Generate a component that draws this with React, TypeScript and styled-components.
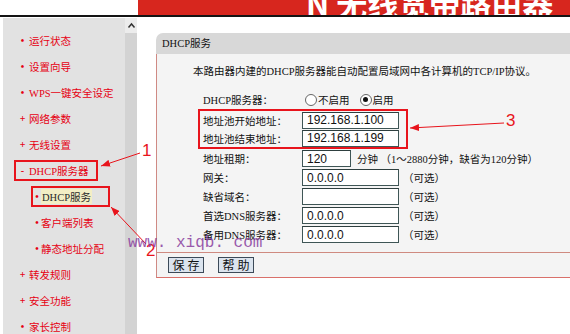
import React from 'react';
import styled, { createGlobalStyle } from 'styled-components';

const GlobalStyle = createGlobalStyle`
  html, body { margin: 0; padding: 0; background: #fff; }
  body {
    font-family: "Liberation Serif", "Noto Sans CJK SC", serif;
    font-size: 10.5px;
    color: #111;
  }
`;

const Page = styled.div`
  position: relative;
  width: 570px;
  height: 334px;
  overflow: hidden;
  display: flex;
  flex-direction: column;
`;

const TopBar = styled.header`
  display: flex;
  height: 15px;
  flex-shrink: 0;
  border-bottom: 2px solid #141414;
`;

const TopBlank = styled.div`
  width: 138px;
  background: #fff;
`;

const Banner = styled.div`
  flex: 1;
  background: #d7261e;
  overflow: hidden;
  display: flex;
  align-items: flex-end;
  padding-left: 168px;
`;

const BannerTitle = styled.span`
  color: #fff;
  font-family: "Noto Sans CJK SC", sans-serif;
  font-weight: 700;
  font-size: 31px;
  line-height: 31px;
  white-space: nowrap;
  margin-bottom: -3px;
`;

const Body = styled.div`
  flex: 1;
  display: flex;
  padding-top: 1px;
  min-height: 0;
`;

const Sidebar = styled.nav`
  width: 122px;
  margin-left: 3px;
  background: #e2e2e2;
`;

const Menu = styled.ul`
  list-style: none;
  margin: 0;
  padding: 9px 0 0;
`;

const MenuItem = styled.li<{ $level: number }>`
  height: 26px;
  display: flex;
  align-items: center;
  padding-left: ${p => (p.$level ? 28 : 11)}px;
`;

const ItemBody = styled.span<{ $box?: number }>`
  display: inline-flex;
  align-items: center;
  box-sizing: border-box;
  height: 21px;
  border: 2px solid ${p => (p.$box ? '#e8141c' : 'transparent')};
  ${p => (p.$box ? `width: ${p.$box}px;` : '')}
  color: #e60012;
`;

const Marker = styled.span<{ $level: number }>`
  width: ${p => (p.$level ? 8 : 13)}px;
  text-align: center;
  font-weight: 700;
  font-size: 10px;
`;

const ItemText = styled.span<{ $active?: boolean }>`
  white-space: nowrap;
  ${p => (p.$active ? 'background: #f3eec4; color: #2a2a2a; padding: 0 1px;' : '')}
`;

const ScrollTrack = styled.div`
  width: 12px;
  background: #d3d3d3;
  display: flex;
  flex-direction: column;
`;

const ScrollUp = styled.div`
  height: 15px;
  background: #ececec;
  display: flex;
  align-items: center;
  justify-content: center;
`;

const Main = styled.main`
  flex: 1;
  min-width: 0;
  overflow: hidden;
  padding: 15px 0 0 19px;
  background: #fff;
`;

const Panel = styled.section`
  width: 440px;
`;

const PanelHead = styled.div`
  height: 21px;
  line-height: 21px;
  background: #d8d8d8;
  border-top-left-radius: 7px;
  padding-left: 6px;
  color: #111;
`;

const PanelBody = styled.div`
  background: #f4f4f4;
  border-left: 1px solid #cf8a84;
  border-bottom: 1px solid #d9706a;
  padding: 8px 0 4px;
`;

const Intro = styled.p`
  margin: 0 0 9px 36px;
  line-height: 19px;
  white-space: nowrap;
`;

const Form = styled.div`
  margin-left: 46px;
`;

const Row = styled.div<{ $h?: number }>`
  display: flex;
  align-items: center;
  height: ${p => p.$h ?? 19}px;
  white-space: nowrap;
`;

const Group = styled.div`
  box-sizing: border-box;
  width: 210px;
  margin-left: -5px;
  padding-left: 3px;
  border: 2px solid #e8141c;
`;

const Label = styled.span`
  width: 99px;
  flex-shrink: 0;
`;

const Field = styled.input<{ $w?: number }>`
  box-sizing: border-box;
  width: ${p => p.$w ?? 97}px;
  height: 17px;
  margin: 0;
  padding: 0 0 0 4px;
  border: 1px solid #3f5656;
  border-top-color: #2e3f3f;
  background: #fff;
  font-family: "Liberation Sans", Arial, sans-serif;
  font-size: 12px;
  color: #111;
  outline: none;
`;

const Hint = styled.span<{ $gap?: number }>`
  margin-left: ${p => p.$gap ?? 4}px;
`;

const RadioOpt = styled.span<{ $gap?: number }>`
  display: inline-flex;
  align-items: center;
  margin-left: ${p => p.$gap ?? 3}px;
`;

const RadioDot = styled.span<{ $on?: boolean }>`
  box-sizing: border-box;
  width: 12px;
  height: 12px;
  border-radius: 50%;
  border: 1px solid #666;
  background: #fff;
  margin-right: 1px;
  display: inline-flex;
  align-items: center;
  justify-content: center;
  &::after {
    content: '';
    width: 5px;
    height: 5px;
    border-radius: 50%;
    background: ${p => (p.$on ? '#111' : 'transparent')};
  }
`;

const Divider = styled.hr`
  margin: 8px 0 4px;
  border: 0;
  border-top: 1px solid #cf8a80;
`;

const Actions = styled.div`
  display: flex;
  gap: 14px;
  padding-left: 11px;
`;

const Btn = styled.button`
  box-sizing: border-box;
  width: 36px;
  height: 16px;
  padding: 0;
  border: 1px solid #3c4a58;
  background: #dbe4ee;
  font-family: "Noto Sans CJK SC", sans-serif;
  font-size: 12px;
  line-height: 14px;
  letter-spacing: 3px;
  text-indent: 3px;
  color: #111;
`;

const Overlay = styled.svg`
  position: absolute;
  left: 0;
  top: 0;
  pointer-events: none;
`;

const Callout = styled.span<{ $x: number; $y: number }>`
  position: absolute;
  left: ${p => p.$x}px;
  top: ${p => p.$y}px;
  font-family: "Liberation Sans", Arial, sans-serif;
  font-size: 17px;
  line-height: 17px;
  color: #e8141c;
`;

const Watermark = styled.span`
  position: absolute;
  left: 128px;
  top: 234px;
  font-family: "Liberation Mono", monospace;
  font-size: 16px;
  line-height: 18px;
  color: #8a3fa0;
  opacity: 0.85;
  white-space: pre;
`;

type MenuEntry = { level: 0 | 1; marker: string; text: string; box?: number; active?: boolean };

const menu: MenuEntry[] = [
  { level: 0, marker: '•', text: '运行状态' },
  { level: 0, marker: '•', text: '设置向导' },
  { level: 0, marker: '•', text: 'WPS一键安全设定' },
  { level: 0, marker: '+', text: '网络参数' },
  { level: 0, marker: '+', text: '无线设置' },
  { level: 0, marker: '-', text: 'DHCP服务器', box: 84 },
  { level: 1, marker: '•', text: 'DHCP服务', box: 79, active: true },
  { level: 1, marker: '•', text: '客户端列表' },
  { level: 1, marker: '•', text: '静态地址分配' },
  { level: 0, marker: '+', text: '转发规则' },
  { level: 0, marker: '+', text: '安全功能' },
  { level: 0, marker: '•', text: '家长控制' },
];

const optional = [
  { label: '网关：', value: '0.0.0.0' },
  { label: '缺省域名：', value: '' },
  { label: '首选DNS服务器：', value: '0.0.0.0' },
  { label: '备用DNS服务器：', value: '0.0.0.0' },
];

export default function App() {
  return (
    <Page>
      <GlobalStyle />
      <TopBar>
        <TopBlank />
        <Banner>
          <BannerTitle>N 无线宽带路由器</BannerTitle>
        </Banner>
      </TopBar>

      <Body>
        <Sidebar>
          <Menu>
            {menu.map(item => (
              <MenuItem key={item.text} $level={item.level}>
                <ItemBody $box={item.box}>
                  <Marker $level={item.level}>{item.marker}</Marker>
                  <ItemText $active={item.active}>{item.text}</ItemText>
                </ItemBody>
              </MenuItem>
            ))}
          </Menu>
        </Sidebar>
        <ScrollTrack>
          <ScrollUp>
            <svg width="9" height="7" viewBox="0 0 9 7">
              <polyline points="1.5,5.5 4.5,2 7.5,5.5" fill="none" stroke="#333" strokeWidth="1.5" />
            </svg>
          </ScrollUp>
        </ScrollTrack>

        <Main>
          <Panel>
            <PanelHead>DHCP服务</PanelHead>
            <PanelBody>
              <Intro>本路由器内建的DHCP服务器能自动配置局域网中各计算机的TCP/IP协议。</Intro>
              <Form>
                <Row>
                  <Label>DHCP服务器：</Label>
                  <RadioOpt>
                    <RadioDot />
                    不启用
                  </RadioOpt>
                  <RadioOpt $gap={10}>
                    <RadioDot $on />
                    启用
                  </RadioOpt>
                </Row>
                <Group>
                  <Row $h={18}>
                    <Label>地址池开始地址：</Label>
                    <Field readOnly value="192.168.1.100" />
                  </Row>
                  <Row $h={18}>
                    <Label>地址池结束地址：</Label>
                    <Field readOnly value="192.168.1.199" />
                  </Row>
                </Group>
                <Row>
                  <Label>地址租期：</Label>
                  <Field readOnly $w={49} value="120" />
                  <Hint $gap={6}>分钟 （1～2880分钟，缺省为120分钟）</Hint>
                </Row>
                {optional.map(o => (
                  <Row key={o.label}>
                    <Label>{o.label}</Label>
                    <Field readOnly value={o.value} />
                    <Hint>（可选）</Hint>
                  </Row>
                ))}
              </Form>
              <Divider />
              <Actions>
                <Btn type="button">保存</Btn>
                <Btn type="button">帮助</Btn>
              </Actions>
            </PanelBody>
          </Panel>
        </Main>
      </Body>

      <Overlay width="570" height="334" viewBox="0 0 570 334">
        <defs>
          <marker id="tip" markerWidth="9" markerHeight="7" refX="9" refY="3.5" orient="auto" markerUnits="userSpaceOnUse">
            <path d="M0,0 L9,3.5 L0,7 z" fill="#e8141c" />
          </marker>
        </defs>
        <line x1="140" y1="153" x2="101" y2="166" stroke="#e8141c" strokeWidth="1" markerEnd="url(#tip)" />
        <line x1="146" y1="244" x2="111" y2="207" stroke="#e8141c" strokeWidth="1" markerEnd="url(#tip)" />
        <line x1="504" y1="123" x2="410" y2="128" stroke="#e8141c" strokeWidth="1" markerEnd="url(#tip)" />
      </Overlay>
      <Callout $x={142} $y={142}>1</Callout>
      <Callout $x={146} $y={242}>2</Callout>
      <Callout $x={506} $y={112}>3</Callout>
      <Watermark>www. xiqb. com</Watermark>
    </Page>
  );
}
